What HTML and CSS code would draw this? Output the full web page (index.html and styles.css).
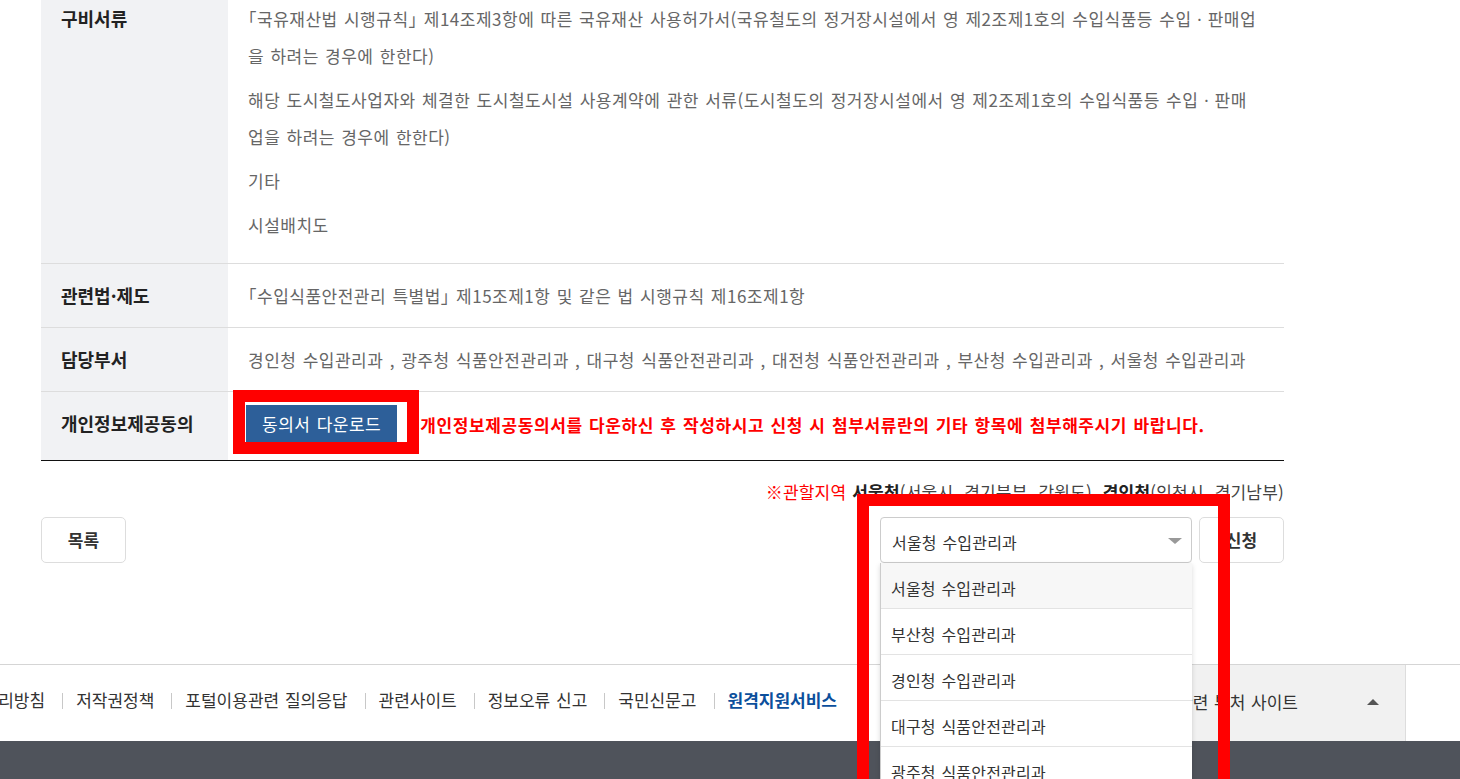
FILE: index.html
```html
<!DOCTYPE html>
<html lang="ko">
<head>
  <meta charset="UTF-8">
  <title>수입식품 민원 안내</title>
  <link rel="stylesheet" href="styles.css">
</head>
<body>

  <div class="page">

    <div class="detail">
      <div class="row">
        <div class="th">구비서류</div>
        <div class="td">
          <p>「국유재산법 시행규칙」 제14조제3항에 따른 국유재산 사용허가서(국유철도의 정거장시설에서 영 제2조제1호의 수입식품등 수입ㆍ판매업을 하려는 경우에 한한다)</p>
          <p>해당 도시철도사업자와 체결한 도시철도시설 사용계약에 관한 서류(도시철도의 정거장시설에서 영 제2조제1호의 수입식품등 수입ㆍ판매업을 하려는 경우에 한한다)</p>
          <p>기타</p>
          <p>시설배치도</p>
        </div>
      </div>
      <div class="row">
        <div class="th">관련법·제도</div>
        <div class="td">「수입식품안전관리 특별법」 제15조제1항 및 같은 법 시행규칙 제16조제1항</div>
      </div>
      <div class="row">
        <div class="th">담당부서</div>
        <div class="td">경인청 수입관리과 , 광주청 식품안전관리과 , 대구청 식품안전관리과 , 대전청 식품안전관리과 , 부산청 수입관리과 , 서울청 수입관리과</div>
      </div>
      <div class="row row-last">
        <div class="th">개인정보제공동의</div>
        <div class="td consent">
          <a class="down-btn">동의서 다운로드</a>
          <strong class="warn">개인정보제공동의서를 다운하신 후 작성하시고 신청 시 첨부서류란의 기타 항목에 첨부해주시기 바랍니다.</strong>
        </div>
      </div>
    </div>

    <p class="area-note"><span class="red">※관할지역</span> <b>서울청</b>(서울시, 경기북부, 강원도), <b>경인청</b>(인천시, 경기남부)</p>

    <div class="actions">
      <a class="btn">목록</a>
      <div class="apply">
        <div class="select open">
          <div class="select-current">서울청 수입관리과</div>
          <ul class="select-list">
            <li class="on">서울청 수입관리과</li>
            <li>부산청 수입관리과</li>
            <li>경인청 수입관리과</li>
            <li>대구청 식품안전관리과</li>
            <li>광주청 식품안전관리과</li>
            <li>대전청 식품안전관리과</li>
          </ul>
        </div>
        <a class="btn">신청</a>
      </div>
    </div>

  </div>

  <footer class="footer">
    <div class="foot-inner">
      <ul class="foot-links">
        <li>개인정보처리방침</li>
        <li>저작권정책</li>
        <li>포털이용관련 질의응답</li>
        <li>관련사이트</li>
        <li>정보오류 신고</li>
        <li>국민신문고</li>
        <li class="remote">원격지원서비스</li>
      </ul>
      <div class="family-site">관련 부처 사이트 <span class="up"></span></div>
    </div>
    <div class="foot-bottom"></div>
  </footer>

  <!-- 강조 표시 -->
  <div class="mark mark-consent"></div>
  <div class="mark mark-select"></div>

</body>
</html>
```

FILE: styles.css
```css
html { overflow: hidden; }
body {
  margin: 0;
  font-family: "Noto Sans CJK KR", "Noto Sans", sans-serif;
  font-size: 17px;
  letter-spacing: 0.5px;
  word-spacing: 1px;
  color: #666;
  background: #fff;
}
ul { list-style: none; margin: 0; padding: 0; }
p { margin: 0; }

.page {
  width: 1243px;
  margin: -20px 0 0 41px;
}

/* 상세 표 */
.detail { border-bottom: 1px solid #111; }
.row {
  display: grid;
  grid-template-columns: 187px 1fr;
  border-bottom: 1px solid #ddd;
}
.row-last { border-bottom: 0; }
.th {
  background: #f1f2f4;
  padding: 13px 0 13px 20px;
  line-height: 37px;
  font-size: 18px;
  letter-spacing: 0;
  font-weight: bold;
  color: #222;
}
.row:first-child .th { padding-top: 20px; }
.td {
  padding: 13px 24px 13px 20px;
  line-height: 37px;
  font-feature-settings: "halt";
}
.row:first-child .td { padding-top: 20px; padding-bottom: 20px; }
.td p + p { margin-top: 7px; }

.consent {
  display: flex;
  align-items: center;
  padding-bottom: 17px;
}
.down-btn {
  display: inline-block;
  height: 38px;
  line-height: 38px;
  padding: 0 16px;
  margin-left: -2px;
  background: #2d5f99;
  color: #fff;
}
.warn {
  margin-left: 23px;
  letter-spacing: 0.6px;
  color: #ff0000;
}

.area-note {
  margin-top: 19px;
  line-height: 24px;
  text-align: right;
  letter-spacing: 0.2px;
  color: #444;
}
.area-note .red { color: #ff0000; }
.area-note b { color: #222; }

/* 버튼 */
.actions {
  display: flex;
  justify-content: space-between;
  margin-top: 13px;
}
.btn {
  display: inline-block;
  box-sizing: border-box;
  width: 85px;
  height: 46px;
  line-height: 44px;
  border: 1px solid #ddd;
  border-radius: 5px;
  text-align: center;
  font-weight: bold;
  letter-spacing: 0;
  color: #333;
}
.apply { display: flex; gap: 7px; }

.select {
  position: relative;
  width: 312px;
}
.select-current {
  box-sizing: border-box;
  height: 46px;
  padding: 4px 0 0 11px;
  line-height: 40px;
  border: 1px solid #ccc;
  border-radius: 4px;
  font-size: 16px;
  letter-spacing: 0.2px;
  color: #333;
}
.select-current::after {
  content: "";
  position: absolute;
  right: 10px;
  top: 21px;
  border-left: 7px solid transparent;
  border-right: 7px solid transparent;
  border-top: 6px solid #999;
}
.select-list {
  position: absolute;
  top: 46px;
  left: 0;
  width: 312px;
  box-sizing: border-box;
  background: #fff;
  border-left: 1px solid #ccc;
  box-shadow: 0 2px 5px rgba(0,0,0,0.15);
  z-index: 10;
}
.select-list li {
  height: 40px;
  padding: 5px 0 0 10px;
  line-height: 40px;
  border-bottom: 1px solid #e3e3e3;
  font-size: 16px;
  letter-spacing: 0.2px;
  color: #333;
}
.select-list li.on { background: #f7f7f7; }

/* 푸터 */
.footer {
  margin-top: 101px;
  border-top: 1px solid #d5d5d5;
}
.foot-inner {
  display: flex;
  height: 76px;
  margin: 0 54px 0 -80px;
}
.foot-links {
  flex: 1;
  display: flex;
  align-items: center;
  padding-bottom: 8px;
  font-size: 17px;
  letter-spacing: 0;
  color: #333;
}
.foot-links li { margin-right: 17px; }
.foot-links li + li::before {
  content: "";
  display: inline-block;
  width: 1px;
  height: 16px;
  margin-right: 13px;
  background: #c8c8c8;
  vertical-align: -2px;
}
.foot-links .remote { font-weight: bold; color: #0b4f9c; }
.family-site {
  width: 228px;
  padding-left: 28px;
  padding-bottom: 3px;
  display: flex;
  align-items: center;
  background: #f1f1f1;
  border-right: 1px solid #ddd;
  font-size: 17px;
  letter-spacing: 0;
  color: #333;
}
.family-site .up {
  margin-left: auto;
  margin-right: 26px;
  border-left: 6px solid transparent;
  border-right: 6px solid transparent;
  border-bottom: 6px solid #555;
}
.foot-bottom {
  height: 60px;
  background: #4f535b;
}

/* 강조 표시 */
.mark {
  position: absolute;
  border: 12px solid #ff0000;
  box-sizing: border-box;
  z-index: 20;
}
.mark-consent { left: 233px; top: 390px; width: 186px; height: 64px; }
.mark-select { left: 857px; top: 494px; width: 373px; height: 320px; }
```
